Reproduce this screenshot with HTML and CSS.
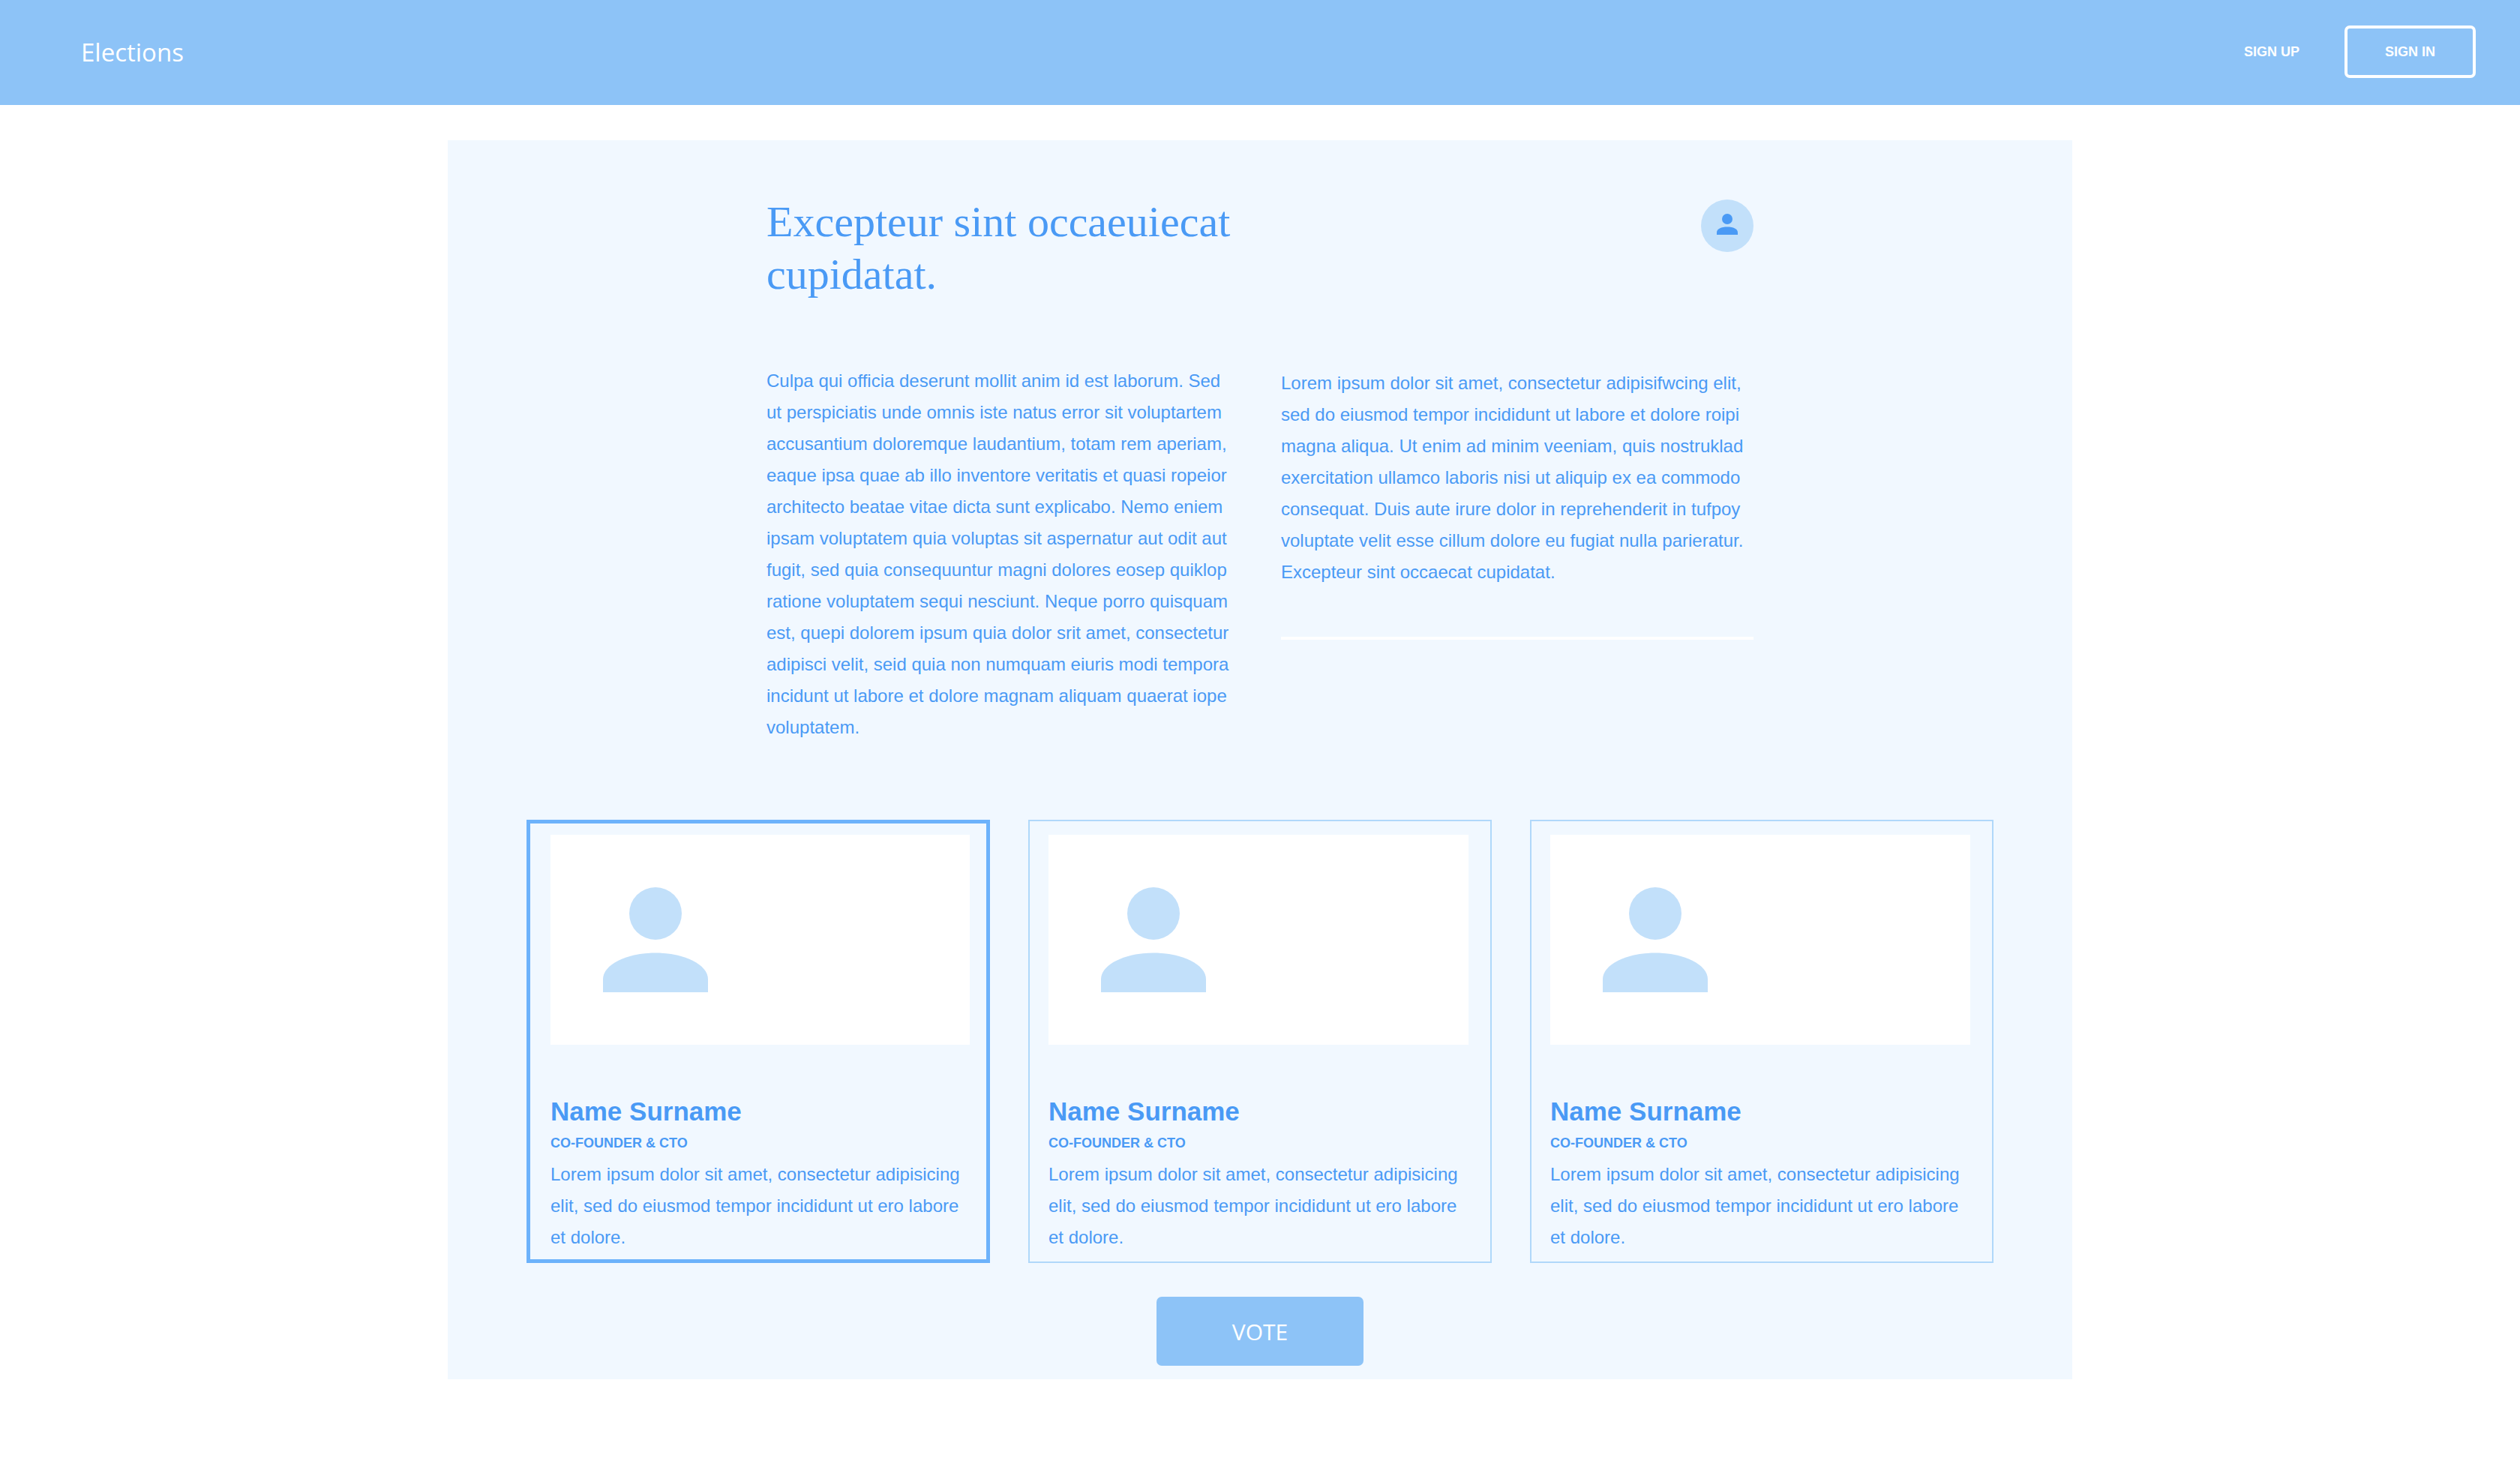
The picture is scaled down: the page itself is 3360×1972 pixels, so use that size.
FILE: index.html
```html
<!DOCTYPE html>
<html lang="en">
<head>
<meta charset="utf-8">
<meta name="viewport" content="width=device-width, initial-scale=1">
<title>Elections</title>
<link rel="stylesheet" href="styles.css">
</head>
<body>
<header class="topbar">
  <a class="brand" href="#">Elections</a>
  <nav class="account">
    <a class="sign-up" href="#">SIGN UP</a>
    <button class="sign-in" type="button">SIGN IN</button>
  </nav>
</header>
<main class="panel">
  <section class="intro">
    <div class="intro-head">
      <h1 class="title">Excepteur sint occaeuiecat<br>cupidatat.</h1>
      <svg class="avatar" viewBox="0 0 70 70" aria-hidden="true"><circle class="avatar-disc" cx="35" cy="35" r="35"/><circle cx="35" cy="26" r="7"/><path d="M21 47V44C21 39 27 36.500 35 36.500S49 39 49 44V47Z"/></svg>
    </div>
    <div class="columns">
      <p class="text">Culpa qui officia deserunt mollit anim id est laborum. Sed<br>ut perspiciatis unde omnis iste natus error sit voluptartem<br>accusantium doloremque laudantium, totam rem aperiam,<br>eaque ipsa quae ab illo inventore veritatis et quasi ropeior<br>architecto beatae vitae dicta sunt explicabo. Nemo eniem<br>ipsam voluptatem quia voluptas sit aspernatur aut odit aut<br>fugit, sed quia consequuntur magni dolores eosep quiklop<br>ratione voluptatem sequi nesciunt. Neque porro quisquam<br>est, quepi dolorem ipsum quia dolor srit amet, consectetur<br>adipisci velit, seid quia non numquam eiuris modi tempora<br>incidunt ut labore et dolore magnam aliquam quaerat iope<br>voluptatem.</p>
      <div class="aside">
        <p class="text">Lorem ipsum dolor sit amet, consectetur adipisifwcing elit,<br>sed do eiusmod tempor incididunt ut labore et dolore roipi<br>magna aliqua. Ut enim ad minim veeniam, quis nostruklad<br>exercitation ullamco laboris nisi ut aliquip ex ea commodo<br>consequat. Duis aute irure dolor in reprehenderit in tufpoy<br>voluptate velit esse cillum dolore eu fugiat nulla parieratur.<br>Excepteur sint occaecat cupidatat.</p>
        <hr class="rule">
      </div>
    </div>
  </section>
  <section class="cards">
    <article class="card card-selected">
      <div class="photo"><svg class="person" viewBox="0 0 8 8" aria-hidden="true"><circle cx="4" cy="2" r="2"/><path d="M0 8V7C0 5.900 1.800 5 4 5s4 .9 4 2v1z"/></svg></div>
      <h2 class="name">Name Surname</h2>
      <p class="role">CO-FOUNDER &amp; CTO</p>
      <p class="text">Lorem ipsum dolor sit amet, consectetur adipisicing<br>elit, sed do eiusmod tempor incididunt ut ero labore<br>et dolore.</p>
    </article>
    <article class="card">
      <div class="photo"><svg class="person" viewBox="0 0 8 8" aria-hidden="true"><circle cx="4" cy="2" r="2"/><path d="M0 8V7C0 5.900 1.800 5 4 5s4 .9 4 2v1z"/></svg></div>
      <h2 class="name">Name Surname</h2>
      <p class="role">CO-FOUNDER &amp; CTO</p>
      <p class="text">Lorem ipsum dolor sit amet, consectetur adipisicing<br>elit, sed do eiusmod tempor incididunt ut ero labore<br>et dolore.</p>
    </article>
    <article class="card">
      <div class="photo"><svg class="person" viewBox="0 0 8 8" aria-hidden="true"><circle cx="4" cy="2" r="2"/><path d="M0 8V7C0 5.900 1.800 5 4 5s4 .9 4 2v1z"/></svg></div>
      <h2 class="name">Name Surname</h2>
      <p class="role">CO-FOUNDER &amp; CTO</p>
      <p class="text">Lorem ipsum dolor sit amet, consectetur adipisicing<br>elit, sed do eiusmod tempor incididunt ut ero labore<br>et dolore.</p>
    </article>
  </section>
  <button class="vote" type="button">VOTE</button>
</main>
</body>
</html>
```
FILE: styles.css
```css
* { box-sizing: border-box; }

body {
  margin: 0;
  background: #fff;
  color: #4a9af5;
  font-family: "Liberation Sans", Arial, sans-serif;
  font-size: 24px;
  line-height: 42px;
}

h1, h2, p { margin: 0; }

.topbar {
  display: flex;
  align-items: center;
  justify-content: space-between;
  height: 140px;
  padding: 0 59px 0 108px;
  background: #8dc3f7;
}

.brand {
  color: #fff;
  font-family: "Segoe UI", "Open Sans", sans-serif;
  font-size: 33px;
  text-decoration: none;
}

.account {
  display: flex;
  align-items: center;
  gap: 60px;
  padding-bottom: 3px;
}

.sign-up,
.sign-in {
  color: #fff;
  font-size: 18px;
  font-weight: bold;
  text-decoration: none;
}

.sign-in {
  width: 175px;
  height: 70px;
  padding: 2px 0 0;
  border: 4px solid #fff;
  border-radius: 7px;
  background: none;
  font-family: inherit;
}

.panel {
  display: flex;
  flex-direction: column;
  align-items: center;
  max-width: 2166px;
  margin: 47px auto;
  padding: 74px 105px 18px;
  background: #f1f8ff;
}

.intro {
  width: 100%;
  max-width: 1316px;
}

.intro-head {
  display: flex;
  align-items: flex-start;
  justify-content: space-between;
  margin-bottom: 86px;
}

.title {
  font-family: Georgia, "Liberation Serif", serif;
  font-size: 58px;
  font-weight: normal;
  line-height: 70px;
}

.avatar {
  width: 70px;
  height: 70px;
  margin-top: 5px;
  fill: #4a9af5;
}

.avatar-disc { fill: #c2e0fa; }

.columns {
  display: grid;
  grid-template-columns: 1fr 1fr;
  gap: 56px;
}

.aside { padding-top: 3px; }

.rule {
  height: 4px;
  margin: 65px 0 0;
  border: 0;
  background: #fff;
}

.cards {
  display: grid;
  grid-template-columns: repeat(3, 1fr);
  gap: 51px;
  width: 100%;
  margin-top: 102px;
}

.card {
  padding: 18px 25px 11px;
  border: 2px solid #b0d8fa;
}

.card-selected {
  padding: 15px 22px 8px 27px;
  border: 5px solid #6cb2fb;
}

.photo {
  max-width: 560px;
  height: 280px;
  padding: 70px;
  background: #fff;
}

.person {
  display: block;
  width: 140px;
  height: 140px;
  fill: #c2e0fa;
}

.name {
  margin-top: 68px;
  font-size: 35px;
  line-height: 42px;
}

.role {
  font-size: 18px;
  font-weight: bold;
}

.vote {
  width: 276px;
  height: 92px;
  margin-top: 45px;
  border: 0;
  border-radius: 7px;
  background: #8dc3f7;
  color: #fff;
  font-family: "Segoe UI", "Open Sans", sans-serif;
  font-size: 30px;
}
```
